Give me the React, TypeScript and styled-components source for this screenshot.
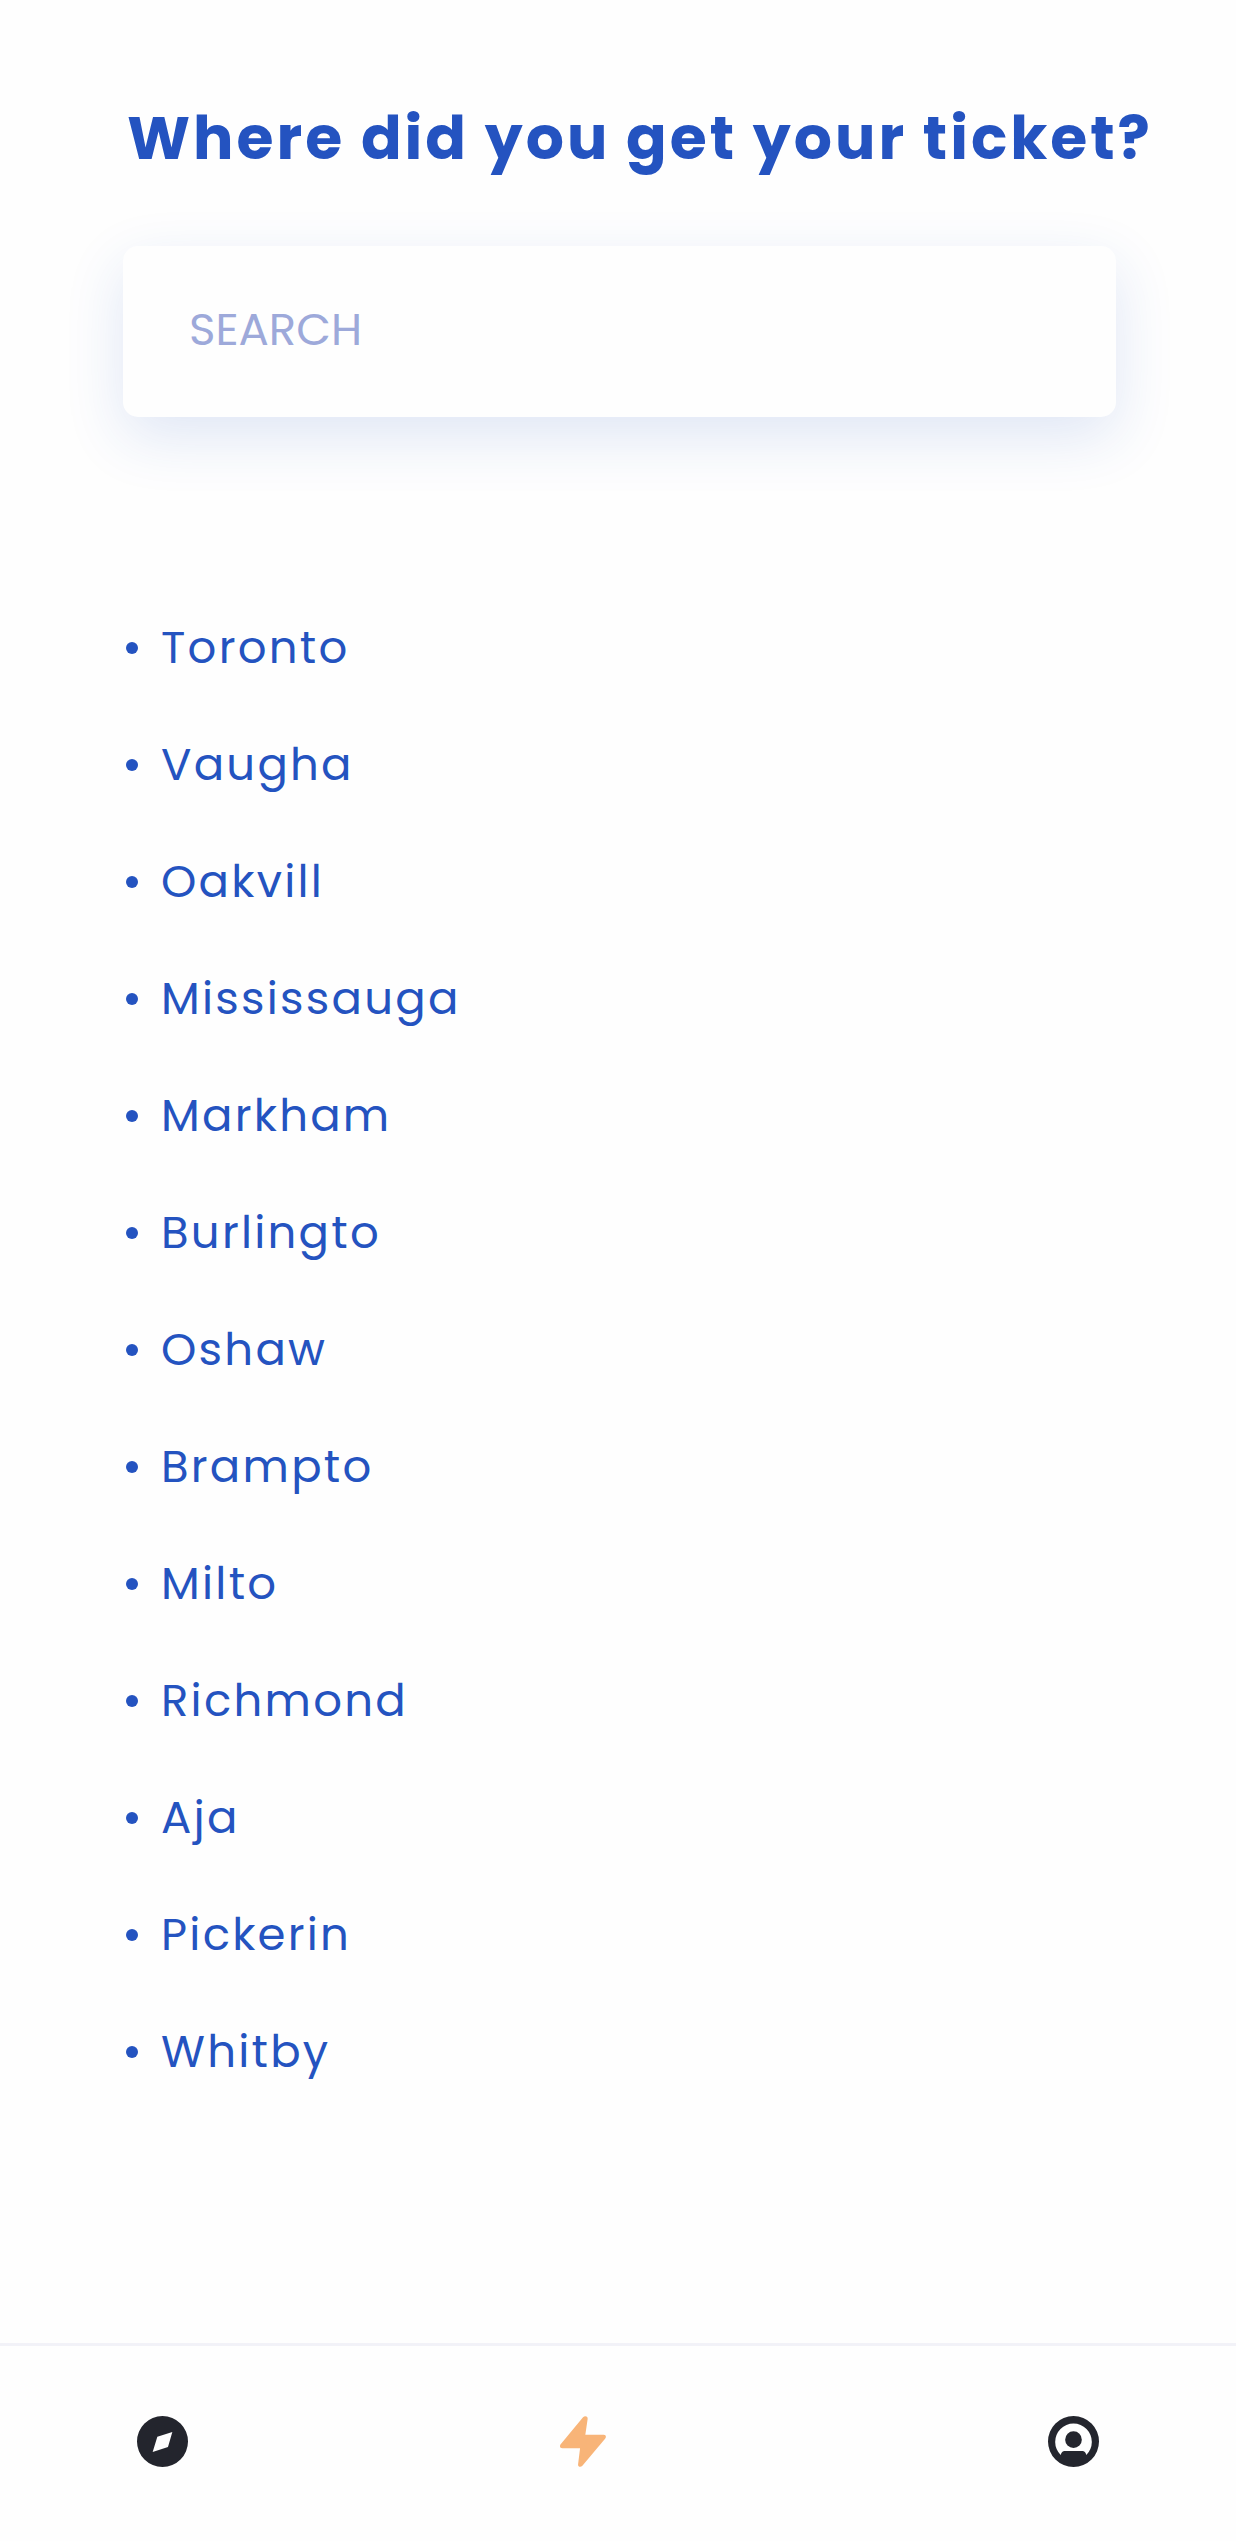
import React, { useState } from "react";
import styled, { createGlobalStyle } from "styled-components";

const blue = "#2453c0";
const ink = "#23252d";

const GlobalStyle = createGlobalStyle`
  *, *::before, *::after { box-sizing: border-box; }
  body {
    margin: 0;
    background: #fefefe;
    color: ${blue};
    font-family: Poppins, Inter, "Liberation Sans", sans-serif;
  }
`;

const Page = styled.div`
  display: flex;
  flex-direction: column;
  min-height: 100vh;
`;

const Main = styled.main`
  flex: 1;
  padding: 93px 120px 64px 123px;
`;

const Title = styled.h1`
  margin: 0 0 63px;
  padding-left: 4px;
  font-size: 60px;
  line-height: 90px;
  font-weight: 700;
  letter-spacing: 0.05em;
  white-space: nowrap;
`;

const SearchInput = styled.input`
  display: block;
  width: 100%;
  height: 171px;
  padding: 0 66px 4px;
  border: 0;
  border-radius: 15px;
  outline: none;
  background: #fefefe;
  box-shadow: 0 20px 60px rgba(36, 83, 192, 0.14);
  color: ${blue};
  font: inherit;
  font-size: 45px;

  &::placeholder {
    color: #9da9da;
    opacity: 1;
  }
`;

const CityList = styled.ul`
  margin: 172px 0 0;
  padding: 0;
  list-style: none;
`;

const City = styled.li`
  display: flex;
  align-items: center;
  gap: 23px;
  height: 117px;
  padding-left: 3px;
  font-size: 45px;
  letter-spacing: 0.05em;

  &::before {
    content: "";
    width: 12px;
    height: 12px;
    border-radius: 50%;
    background: ${blue};
  }
`;

const NavBar = styled.nav`
  display: grid;
  grid-template-columns: 13fr 15fr auto;
  justify-items: start;
  padding: 70px 137px 74px;
  border-top: 3px solid #f2f2f8;
`;

const NavButton = styled.button<{ $active?: boolean }>`
  display: flex;
  padding: 0;
  border: 0;
  background: none;
  color: ${(p) => (p.$active ? "#f8b478" : ink)};
  cursor: pointer;

  svg {
    display: block;
    height: 51px;
    fill: currentColor;
  }
`;

const cities = [
  "Toronto",
  "Vaugha",
  "Oakvill",
  "Mississauga",
  "Markham",
  "Burlingto",
  "Oshaw",
  "Brampto",
  "Milto",
  "Richmond",
  "Aja",
  "Pickerin",
  "Whitby",
];

const CompassIcon = () => (
  <svg viewBox="0 0 153 153" aria-hidden="true">
    <path
      fillRule="evenodd"
      d="M76.500 0a76.500 76.500 0 1 1 0 153a76.500 76.500 0 0 1 0-153ZM106 48L61 62L47 108L93 93Z"
    />
  </svg>
);

const BoltIcon = () => (
  <svg viewBox="0 0 140 155" aria-hidden="true">
    <path d="M70 4C75-2 85 0 84 9L77 57H133C139 57 142 63 137 69L68 151C63 157 54 155 55 147L61 98H7C0 98-2 92 2 86Z" />
  </svg>
);

const AccountIcon = () => (
  <svg viewBox="0 0 153 153" aria-hidden="true">
    <path
      fillRule="evenodd"
      d="M76.500 0a76.500 76.500 0 1 1 0 153a76.500 76.500 0 0 1 0-153ZM38 117Q41 105 50 105H103Q112 105 115 117A55 55 0 1 0 38 117Z"
    />
    <circle cx="76.500" cy="71" r="25" />
  </svg>
);

export default function App() {
  const [query, setQuery] = useState("");
  const visible = cities.filter((c) => c.toLowerCase().includes(query.toLowerCase()));

  return (
    <Page>
      <GlobalStyle />
      <Main>
        <Title>Where did you get your ticket?</Title>
        <SearchInput
          type="text"
          aria-label="Search"
          placeholder="SEARCH"
          value={query}
          onChange={(e) => setQuery(e.target.value)}
        />
        <CityList>
          {visible.map((city) => (
            <City key={city}>{city}</City>
          ))}
        </CityList>
      </Main>
      <NavBar>
        <NavButton type="button" aria-label="Explore">
          <CompassIcon />
        </NavButton>
        <NavButton type="button" aria-label="Activity" $active>
          <BoltIcon />
        </NavButton>
        <NavButton type="button" aria-label="Account">
          <AccountIcon />
        </NavButton>
      </NavBar>
    </Page>
  );
}
